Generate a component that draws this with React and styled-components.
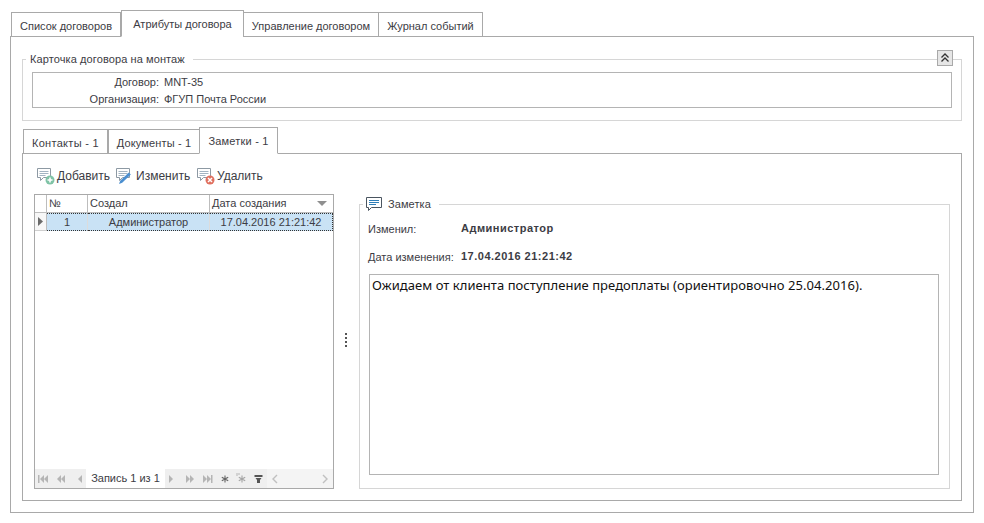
import React from 'react'
import styled, { createGlobalStyle } from 'styled-components'

const Global = createGlobalStyle`
  html, body { margin: 0; padding: 0; background: #fff; }
  body { font-family: "Liberation Sans", Arial, sans-serif; font-size: 11px; color: #39393d; }
  * { box-sizing: border-box; }
`

const Page = styled.div`
  width: 984px;
  height: 523px;
  padding: 11px 10px 10px 10px;
  overflow: hidden;
`

const TabRow = styled.div`
  display: flex;
  align-items: flex-end;
  height: 26px;
  padding-left: 1px;
  position: relative;
  z-index: 1;
  margin-bottom: -1px;
`

const Tab = styled.div`
  width: ${({ $w }) => $w}px;
  height: ${({ $active }) => ($active ? 27 : 25)}px;
  margin-left: ${({ $gap }) => $gap || 0}px;
  border: 1px solid #a9a9a9;
  border-bottom: ${({ $active }) => ($active ? '1px solid #fff' : '1px solid #a9a9a9')};
  background: #fff;
  display: flex;
  justify-content: center;
  align-items: center;
  padding-top: ${({ $active }) => ($active ? 0 : 2)}px;
  letter-spacing: ${({ $ls }) => $ls || 0}px;
  white-space: nowrap;
  color: #3c3c44;
`

const Panel = styled.div`
  width: 964px;
  height: 477px;
  border: 1px solid #a9a9a9;
  padding: 15px 11px 11px 11px;
`

const CardGroup = styled.fieldset`
  margin: 0;
  height: 69px;
  border: 1px solid #d6d6d6;
  padding: 0 9px;
  position: relative;
`

const GroupLegend = styled.legend`
  padding: 0 8px 0 4px;
  margin-left: -6px;
  display: flex;
  align-items: center;
  gap: 6px;
  height: 14px;
  line-height: 14px;
  letter-spacing: 0.1px;
  color: #3c3c44;
`

const CollapseButton = styled.div`
  position: absolute;
  top: -16px;
  right: 8px;
  width: 16px;
  height: 16px;
  background: #e6e6e6;
  border: 1px solid #a9a9a9;
  display: flex;
  align-items: center;
  justify-content: center;
`

const InfoBox = styled.div`
  height: 36px;
  border: 1px solid #b4b4b4;
  margin-top: 6px;
  padding-top: 1px;
`

const InfoRow = styled.div`
  display: grid;
  grid-template-columns: 126px 1fr;
  column-gap: 5px;
  height: 17px;
  line-height: 17px;
  color: #3c3c44;
`

const InfoLabel = styled.div`
  text-align: right;
`

const InnerTabs = styled.div`
  margin-top: 7px;
`

const InnerPanel = styled.div`
  width: 940px;
  height: 348px;
  border: 1px solid #a9a9a9;
  padding: 12px 11px 11px 11px;
`

const Toolbar = styled.div`
  display: flex;
  align-items: center;
  height: 20px;
  padding-left: 2px;
  font-size: 12px;
`

const ToolButton = styled.div`
  display: flex;
  align-items: center;
  gap: 2px;
  width: ${({ $w }) => $w}px;
  color: #3c3c44;
`

const Body = styled.div`
  display: flex;
  margin-top: 8px;
  height: 295px;
`

const GridBox = styled.div`
  width: 300px;
  height: 295px;
  border: 1px solid #a9a9a9;
  display: flex;
  flex-direction: column;
`

const GridRow = styled.div`
  display: grid;
  grid-template-columns: 12px 41px 122px 1fr;
  height: 18px;
`

const HeaderCell = styled.div`
  border-right: 1px solid #bdbdbd;
  border-bottom: 1px solid #bdbdbd;
  padding-left: 2px;
  line-height: 17px;
  position: relative;
  white-space: nowrap;
  color: #3c3c44;
  &:last-child { border-right: none; }
`

const SortArrow = styled.span`
  position: absolute;
  right: 6px;
  top: 6px;
  width: 0;
  height: 0;
  border-left: 5px solid transparent;
  border-right: 5px solid transparent;
  border-top: 5px solid #8f8f8f;
`

const IndicatorCell = styled.div`
  background: #f7f7f7;
  border-right: 1px solid #bdbdbd;
  border-bottom: 1px solid #cfcfcf;
  display: flex;
  align-items: center;
  padding-left: 3px;
`

const DataCell = styled.div`
  background: #c9e2f5;
  border-right: 1px solid #dcdcdc;
  border-top: 1px dotted #333;
  border-bottom: 1px dotted #333;
  text-align: center;
  line-height: 16px;
  white-space: nowrap;
  color: #3c3c44;
  &:last-child { border-right: 1px dotted #333; }
`

const GridSpace = styled.div`
  flex: 1;
`

const Navigator = styled.div`
  height: 19px;
  background: #efefef;
  display: flex;
  align-items: center;
`

const NavGroup = styled.div`
  display: flex;
  align-items: center;
  height: 100%;
  width: ${({ $w }) => $w}px;
  background: ${({ $bg }) => $bg || 'transparent'};
  justify-content: ${({ $spread }) => ($spread ? 'space-between' : 'flex-start')};
  padding: ${({ $spread }) => ($spread ? '0 4px' : '0')};
`

const NavSlot = styled.div`
  width: 17px;
  display: flex;
  justify-content: center;
`

const RecordLabel = styled.div`
  width: 79px;
  height: 100%;
  background: #fff;
  line-height: 19px;
  text-align: center;
  white-space: nowrap;
  color: #3c3c44;
`

const Splitter = styled.div`
  width: 25px;
  display: flex;
  flex-direction: column;
  justify-content: center;
  align-items: center;
  gap: 2px;
  padding: 0 1px 3px 0;
`

const SplitDot = styled.span`
  width: 2px;
  height: 2px;
  background: #555;
`

const NoteGroup = styled.fieldset`
  margin: 3px 0 0 0;
  width: 591px;
  height: 292px;
  border: 1px solid #d6d6d6;
  padding: 0 9px 13px 9px;
  display: flex;
  flex-direction: column;
`

const NoteRow = styled.div`
  display: grid;
  grid-template-columns: 93px 1fr;
  height: ${({ $h }) => $h}px;
  margin: ${({ $mt }) => $mt}px 0 0 -1px;
  align-items: center;
  color: #3c3c44;
`

const NoteValue = styled.div`
  font-weight: 700;
  letter-spacing: 0.5px;
  position: relative;
  top: -1px;
`

const NoteText = styled.div`
  margin-top: 4px;
  width: 570px;
  height: 202px;
  border: 1px solid #b4b4b4;
  padding: 2px;
  font-family: "Noto Sans", sans-serif;
  font-size: 13px;
  line-height: 16px;
  letter-spacing: 0.05px;
  color: #111;
  white-space: nowrap;
`

const BubbleSvg = styled.svg`
  display: block;
  flex: none;
`

const NoteSvg = styled.svg`
  display: block;
  flex: none;
  margin-left: -1px;
`

const bubbleBadges = {
  add: (
    <>
      <circle cx="14" cy="13" r="4.5" fill="#7fc3a6" />
      <path d="M14 10.5v5M11.5 13h5" stroke="#fff" strokeWidth="1.6" />
    </>
  ),
  edit: (
    <path d="M4 17l1.2-3.2 8.6-8.3 2 2-8.6 8.3z" fill="#4b8fd0" />
  ),
  remove: (
    <>
      <circle cx="14" cy="13" r="4.5" fill="#e0705f" />
      <path d="M12 11l4 4M16 11l-4 4" stroke="#fff" strokeWidth="1.5" />
    </>
  )
}

const BubbleIcon = ({ kind }) => (
  <BubbleSvg width="19" height="18" viewBox="0 0 19 18">
    <path d="M1.5 1.5h13v9h-7l-3 3v-3h-3z" fill="#fff" stroke="#8d99a3" />
    <path d="M3.5 4.5h9M3.5 6.5h9M3.5 8.5h6" stroke="#a3b4c2" />
    {bubbleBadges[kind]}
  </BubbleSvg>
)

const NoteIcon = () => (
  <NoteSvg width="16" height="15" viewBox="0 0 16 15">
    <path d="M0.5 0.5h15v10h-10l-3 3v-3h-2z" fill="#fff" stroke="#4a5560" />
    <path d="M3 3.5h10M3 5.5h10M3 7.5h7" stroke="#2f7fb8" />
  </NoteSvg>
)

const ChevronsUp = () => (
  <svg width="10" height="10" viewBox="0 0 10 10">
    <path d="M1.5 4.5L5 1l3.5 3.5M1.5 8.5L5 5l3.5 3.5" fill="none" stroke="#333" strokeWidth="1.3" />
  </svg>
)

const RowPointer = () => (
  <svg width="5" height="9" viewBox="0 0 5 9">
    <path d="M0 0l5 4.5L0 9z" fill="#6b6b6b" />
  </svg>
)

// d: -1 назад, 1 вперёд
const NavArrows = ({ count, bar, d }) => {
  const tris = []
  for (let i = 0; i < count; i++) {
    const x = d > 0 ? 1 + i * 4 : 10 - i * 4
    tris.push(
      <path
        key={i}
        d={d > 0 ? `M${x} 1l4 4-4 4z` : `M${x} 1l-4 4 4 4z`}
        fill="#b5b5b5"
      />
    )
  }
  return (
    <svg width="11" height="10" viewBox="0 0 11 10">
      {bar && <rect x={d > 0 ? 9 : 0} y="1" width="1.5" height="8" fill="#b5b5b5" />}
      {tris}
    </svg>
  )
}

const Star = ({ color, tick }) => (
  <svg width="11" height="11" viewBox="0 0 11 11">
    <path d="M6 2.5v7M2.8 4.2l6.4 3.6M9.2 4.2L2.8 7.8" stroke={color} strokeWidth="1.1" />
    {tick && <path d="M1 0v3M3 0v2" stroke="#b5b5b5" />}
  </svg>
)

const FilterIcon = () => (
  <svg width="9" height="10" viewBox="0 0 9 10">
    <path d="M0.5 1h8v2h-8zM1.5 4h6L6 6v3H3V6z" fill="#555" />
  </svg>
)

const Caret = ({ d }) => (
  <svg width="8" height="10" viewBox="0 0 8 10">
    <path d={d > 0 ? 'M2 1l4 4-4 4' : 'M6 1L2 5l4 4'} fill="none" stroke="#c0c0c0" strokeWidth="1.4" />
  </svg>
)

const App = () => {
  return (
    <Page>
      <Global />
      <TabRow>
        <Tab $w={110}>Список договоров</Tab>
        <Tab $w={123} $active>Атрибуты договора</Tab>
        <Tab $w={136} $gap={-1}>Управление договором</Tab>
        <Tab $w={105} $gap={-1}>Журнал событий</Tab>
      </TabRow>
      <Panel>
        <CardGroup>
          <GroupLegend>Карточка договора на монтаж</GroupLegend>
          <CollapseButton><ChevronsUp /></CollapseButton>
          <InfoBox>
            <InfoRow>
              <InfoLabel>Договор:</InfoLabel>
              <div>MNT-35</div>
            </InfoRow>
            <InfoRow>
              <InfoLabel>Организация:</InfoLabel>
              <div>ФГУП Почта России</div>
            </InfoRow>
          </InfoBox>
        </CardGroup>
        <InnerTabs>
          <TabRow>
            <Tab $w={85} $ls={0.3}>Контакты - 1</Tab>
            <Tab $w={92} $ls={0.15}>Документы - 1</Tab>
            <Tab $w={79} $active $gap={-1} $ls={0.2}>Заметки - 1</Tab>
          </TabRow>
          <InnerPanel>
            <Toolbar>
              <ToolButton $w={79}><BubbleIcon kind="add" />Добавить</ToolButton>
              <ToolButton $w={81}><BubbleIcon kind="edit" />Изменить</ToolButton>
              <ToolButton $w={80}><BubbleIcon kind="remove" />Удалить</ToolButton>
            </Toolbar>
            <Body>
              <GridBox>
                <GridRow>
                  <HeaderCell />
                  <HeaderCell>№</HeaderCell>
                  <HeaderCell>Создал</HeaderCell>
                  <HeaderCell>Дата создания<SortArrow /></HeaderCell>
                </GridRow>
                <GridRow>
                  <IndicatorCell><RowPointer /></IndicatorCell>
                  <DataCell>1</DataCell>
                  <DataCell>Администратор</DataCell>
                  <DataCell>17.04.2016 21:21:42</DataCell>
                </GridRow>
                <GridSpace />
                <Navigator>
                  <NavGroup $w={51}>
                    <NavSlot><NavArrows count={2} bar d={-1} /></NavSlot>
                    <NavSlot><NavArrows count={2} d={-1} /></NavSlot>
                    <NavSlot><NavArrows count={1} d={-1} /></NavSlot>
                  </NavGroup>
                  <RecordLabel>Запись 1 из 1</RecordLabel>
                  <NavGroup $w={102}>
                    <NavSlot><NavArrows count={1} d={1} /></NavSlot>
                    <NavSlot><NavArrows count={2} d={1} /></NavSlot>
                    <NavSlot><NavArrows count={2} bar d={1} /></NavSlot>
                    <NavSlot><Star color="#666" /></NavSlot>
                    <NavSlot><Star color="#a5a5a5" tick /></NavSlot>
                    <NavSlot><FilterIcon /></NavSlot>
                  </NavGroup>
                  <NavGroup $w={66} $bg="#f4f4f4" $spread>
                    <Caret d={-1} />
                    <Caret d={1} />
                  </NavGroup>
                </Navigator>
              </GridBox>
              <Splitter>
                <SplitDot /><SplitDot /><SplitDot /><SplitDot />
              </Splitter>
              <NoteGroup>
                <GroupLegend><NoteIcon />Заметка</GroupLegend>
                <NoteRow $h={28} $mt={4}>
                  <div>Изменил:</div>
                  <NoteValue>Администратор</NoteValue>
                </NoteRow>
                <NoteRow $h={26} $mt={1}>
                  <div>Дата изменения:</div>
                  <NoteValue>17.04.2016 21:21:42</NoteValue>
                </NoteRow>
                <NoteText>Ожидаем от клиента поступление предоплаты (ориентировочно 25.04.2016).</NoteText>
              </NoteGroup>
            </Body>
          </InnerPanel>
        </InnerTabs>
      </Panel>
    </Page>
  )
}

export default App
